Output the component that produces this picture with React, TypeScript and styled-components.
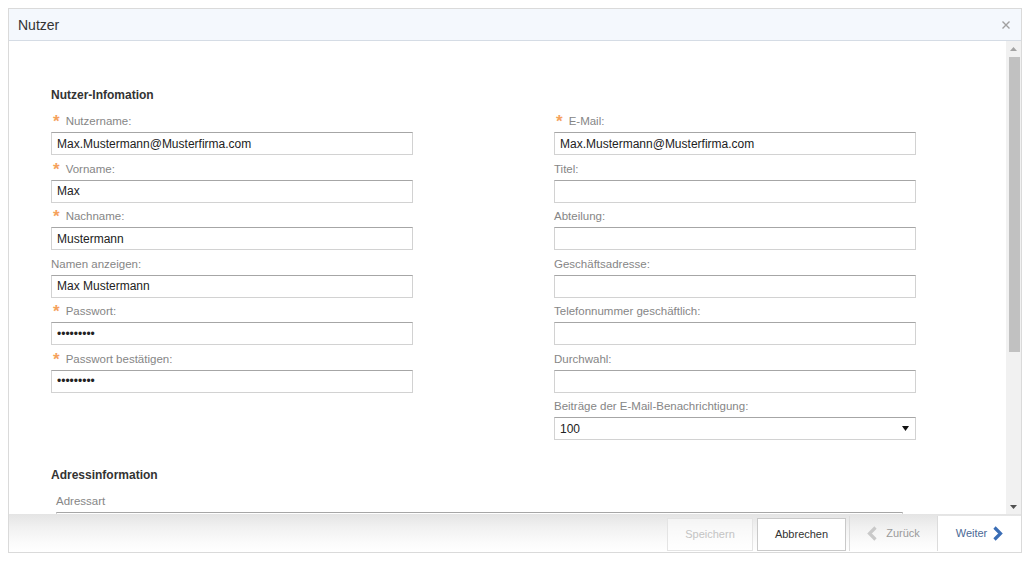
import React from "react";
import styled, { createGlobalStyle } from "styled-components";

const GlobalStyle = createGlobalStyle`
  html, body { margin: 0; padding: 0; background: #ffffff; }
  body { margin: 8px; font-family: "Liberation Sans", Arial, sans-serif; font-size: 12px; color: #333; }
  * { box-sizing: border-box; }
`;

const Dialog = styled.div`
  width: 1014px;
  height: 545px;
  border: 1px solid #dadada;
  box-shadow: 0 0 2px rgba(0, 0, 0, 0.06);
  display: flex;
  flex-direction: column;
  overflow: hidden;
  background: #fff;
`;

const Header = styled.div`
  height: 32px;
  flex: none;
  background: #f4f8fd;
  border-bottom: 1px solid #d5dce5;
  display: flex;
  align-items: center;
  justify-content: space-between;
  padding: 0 9px 0 9px;
`;

const Title = styled.div`
  font-size: 14px;
  color: #333;
  line-height: 16px;
`;

const CloseButton = styled.button`
  border: none;
  background: transparent;
  padding: 0;
  width: 12px;
  height: 12px;
  display: flex;
  align-items: center;
  justify-content: center;
  cursor: pointer;
  margin-top: 1px;
`;

const Body = styled.div`
  flex: 1;
  min-height: 0;
  display: flex;
`;

const Content = styled.div`
  flex: 1;
  overflow: hidden;
  padding: 45px 0 0 42px;
`;

const SectionTitle = styled.div<{ $top?: number }>`
  font-weight: bold;
  font-size: 12px;
  line-height: 18px;
  color: #333;
  margin-top: ${(p) => p.$top ?? 0}px;
`;

const FormGrid = styled.div`
  display: grid;
  grid-template-columns: 362px 362px;
  column-gap: 141px;
  margin-top: 9px;
  align-items: start;
`;

const Column = styled.div`
  display: flex;
  flex-direction: column;
`;

const Field = styled.div<{ $indent?: number; $width?: number; $top?: number }>`
  margin-bottom: 5.5px;
  margin-top: ${(p) => p.$top ?? 0}px;
  margin-left: ${(p) => p.$indent ?? 0}px;
  width: ${(p) => (p.$width ? `${p.$width}px` : "auto")};
`;

const Label = styled.label`
  display: flex;
  align-items: flex-start;
  height: 16px;
  line-height: 16px;
  margin-bottom: 3px;
  font-size: 11.5px;
  color: #868686;
`;

const Required = styled.span`
  color: #f5a25d;
  font-size: 17px;
  line-height: 16px;
  height: 16px;
  margin: 1px 6px 0 2px;
  font-weight: bold;
`;

const TextInput = styled.input`
  display: block;
  width: 100%;
  height: 23px;
  padding: 0 5px;
  border: 1px solid #d2d2d2;
  border-top-color: #a6a6a6;
  font-family: "Liberation Sans", Arial, sans-serif;
  font-size: 12px;
  color: #222;
  background: #fff;
  outline: none;
  border-radius: 0;
`;

const SelectBox = styled.div`
  height: 23px;
  border: 1px solid #d2d2d2;
  border-top-color: #a6a6a6;
  display: flex;
  align-items: center;
  justify-content: space-between;
  padding: 0 6px 0 5px;
  font-size: 12px;
  color: #222;
  background: #fff;
`;

const Scrollbar = styled.div`
  width: 15px;
  flex: none;
  background: #f1f1f1;
  display: flex;
  flex-direction: column;
`;

const ScrollArrow = styled.div`
  height: 15px;
  flex: none;
  display: flex;
  align-items: center;
  justify-content: center;
`;

const ScrollTrack = styled.div`
  flex: 1;
  padding: 1px 1px 0 3px;
`;

const Thumb = styled.div`
  height: 295px;
  background: #c1c1c1;
`;

const Footer = styled.div`
  height: 38px;
  flex: none;
  background: linear-gradient(#e4e4e4 0%, #f1f1f1 35%, #fbfbfb 75%, #ffffff 100%);
  display: flex;
  justify-content: flex-end;
  align-items: center;
`;

const ActionButton = styled.button<{ $disabled?: boolean; $width: number }>`
  width: ${(p) => p.$width}px;
  height: 33px;
  margin-left: 4px;
  margin-top: 2px;
  border: 1px solid ${(p) => (p.$disabled ? "#e4e4e4" : "#c9c9c9")};
  background: ${(p) => (p.$disabled ? "rgba(255,255,255,0.5)" : "#fff")};
  color: ${(p) => (p.$disabled ? "#c4c4c4" : "#333")};
  font-family: "Liberation Sans", Arial, sans-serif;
  font-size: 11px;
  padding: 0;
  cursor: ${(p) => (p.$disabled ? "default" : "pointer")};
`;

const NavButton = styled.button<{ $primary?: boolean; $width: number; $first?: boolean; $gap: number }>`
  width: ${(p) => p.$width}px;
  height: 35px;
  margin-left: ${(p) => (p.$first ? 3 : 0)}px;
  border: none;
  border-left: 1px solid #dcdcdc;
  background: ${(p) => (p.$primary ? "#ffffff" : "transparent")};
  color: ${(p) => (p.$primary ? "#4b6996" : "#9a9a9a")};
  font-family: "Liberation Sans", Arial, sans-serif;
  font-size: 11px;
  display: flex;
  align-items: center;
  justify-content: center;
  gap: ${(p) => p.$gap}px;
  padding: 0;
  cursor: pointer;
`;

type FieldDef = { label: string; required?: boolean; value?: string; type?: string; select?: boolean };

const leftFields: FieldDef[] = [
  { label: "Nutzername:", required: true, value: "Max.Mustermann@Musterfirma.com" },
  { label: "Vorname:", required: true, value: "Max" },
  { label: "Nachname:", required: true, value: "Mustermann" },
  { label: "Namen anzeigen:", value: "Max Mustermann" },
  { label: "Passwort:", required: true, value: "123456789", type: "password" },
  { label: "Passwort bestätigen:", required: true, value: "123456789", type: "password" },
];

const rightFields: FieldDef[] = [
  { label: "E-Mail:", required: true, value: "Max.Mustermann@Musterfirma.com" },
  { label: "Titel:", value: "" },
  { label: "Abteilung:", value: "" },
  { label: "Geschäftsadresse:", value: "" },
  { label: "Telefonnummer geschäftlich:", value: "" },
  { label: "Durchwahl:", value: "" },
  { label: "Beiträge der E-Mail-Benachrichtigung:", value: "100", select: true },
];

const FormField: React.FC<{ f: FieldDef }> = ({ f }) => (
  <Field>
    <Label>
      {f.required && <Required>*</Required>}
      {f.label}
    </Label>
    {f.select ? (
      <SelectBox>
        <span>{f.value}</span>
        <svg width="7" height="5" viewBox="0 0 7 5">
          <polygon points="0,0 7,0 3.5,5" fill="#111" />
        </svg>
      </SelectBox>
    ) : (
      <TextInput type={f.type ?? "text"} value={f.value} readOnly />
    )}
  </Field>
);

const Chevron: React.FC<{ dir: "left" | "right"; color: string }> = ({ dir, color }) => (
  <svg width="11" height="15" viewBox="0 0 11 15">
    {dir === "left" ? (
      <polyline points="8.5,1.5 2.5,7.5 8.5,13.5" fill="none" stroke={color} strokeWidth="3.2" />
    ) : (
      <polyline points="2.5,1.5 8.5,7.5 2.5,13.5" fill="none" stroke={color} strokeWidth="3.2" />
    )}
  </svg>
);

export default function App() {
  return (
    <>
      <GlobalStyle />
      <Dialog>
        <Header>
          <Title>Nutzer</Title>
          <CloseButton aria-label="Schließen">
            <svg width="8" height="8" viewBox="0 0 8 8">
              <path d="M0.5 0.5 L7.5 7.5 M7.5 0.5 L0.5 7.5" stroke="#a0a0a0" strokeWidth="1.4" />
            </svg>
          </CloseButton>
        </Header>
        <Body>
          <Content>
            <SectionTitle>Nutzer-Infomation</SectionTitle>
            <FormGrid>
              <Column>
                {leftFields.map((f) => (
                  <FormField key={f.label} f={f} />
                ))}
              </Column>
              <Column>
                {rightFields.map((f) => (
                  <FormField key={f.label} f={f} />
                ))}
              </Column>
            </FormGrid>
            <SectionTitle $top={20.5}>Adressinformation</SectionTitle>
            <Field $indent={5} $width={847} $top={9}>
              <Label>Adressart</Label>
              <TextInput type="text" value="" readOnly />
            </Field>
          </Content>
          <Scrollbar>
            <ScrollArrow>
              <svg width="7" height="4" viewBox="0 0 7 4">
                <polygon points="0,4 7,4 3.5,0" fill="#a3a3a3" />
              </svg>
            </ScrollArrow>
            <ScrollTrack>
              <Thumb />
            </ScrollTrack>
            <ScrollArrow>
              <svg width="7" height="4" viewBox="0 0 7 4">
                <polygon points="0,0 7,0 3.5,4" fill="#505050" />
              </svg>
            </ScrollArrow>
          </Scrollbar>
        </Body>
        <Footer>
          <ActionButton $disabled $width={86} disabled>
            Speichern
          </ActionButton>
          <ActionButton $width={89}>Abbrechen</ActionButton>
          <NavButton $width={88} $first $gap={8}>
            <Chevron dir="left" color="#c9c9c9" />
            Zurück
          </NavButton>
          <NavButton $width={84} $primary $gap={5}>
            Weiter
            <Chevron dir="right" color="#3a6db5" />
          </NavButton>
        </Footer>
      </Dialog>
    </>
  );
}
